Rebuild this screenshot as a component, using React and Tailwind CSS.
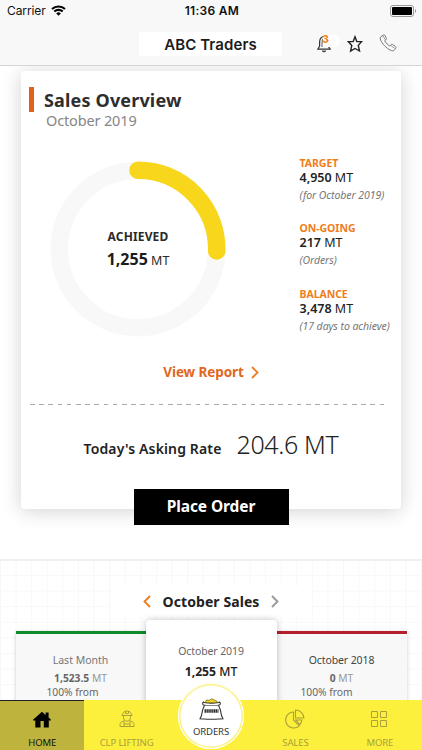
import React from "react";

const stats = [
    { label: "TARGET", value: "4,950", note: "(for October 2019)" },
    { label: "ON-GOING", value: "217", note: "(Orders)" },
    { label: "BALANCE", value: "3,478", note: "(17 days to achieve)" },
];

const Chevron = ({ className, left }) => (
    <svg className={className} width="8" height="13" viewBox="0 0 8 13" fill="none" stroke="currentColor" strokeWidth="1.9">
        <path d={left ? "M7 1 1.5 6.5 7 12" : "M1 1l5.5 5.5L1 12"} />
    </svg>
);

const StatusBar = () => (
    <div className="grid h-[22px] grid-cols-3 items-center pl-[7px] pr-[5px] font-[Inter,sans-serif] text-[12px] leading-[22px] text-[#111]">
        <div className="flex items-center gap-[5px]">
            <span className="tracking-[-0.1px]">Carrier</span>
            <svg className="-mt-[2px]" width="15" height="11" viewBox="0 0 15 11" fill="none" stroke="#000" strokeWidth="2.1">
                <path d="M1 4.1a9.3 9.3 0 0 1 13 0" />
                <path d="M3.3 6.6a6 6 0 0 1 8.4 0" />
                <path d="M7.5 10.8 5.2 8.4a3.4 3.4 0 0 1 4.6 0z" fill="#000" stroke="none" />
            </svg>
        </div>
        <span className="text-center font-semibold tracking-[0.3px]">11:36 AM</span>
        <svg className="-mt-[1px] justify-self-end" width="27" height="12" viewBox="0 0 27 12">
            <rect x="0.5" y="0.5" width="23" height="11" rx="2.5" fill="none" stroke="#999" />
            <rect x="2" y="2" width="20" height="8" rx="1" fill="#000" />
            <path d="M25 4v4c1.6-.6 1.6-3.4 0-4z" fill="#999" />
        </svg>
    </div>
);

const Header = () => (
    <header className="h-[66px] shrink-0 border-b border-[#d4d4d4] bg-[#f8f8f8]">
        <StatusBar />
        <div className="flex h-[43px] items-center">
            <h1 className="ml-[139px] h-[24px] w-[143px] bg-white text-center font-[Inter,sans-serif] text-[15px] font-semibold leading-[25px] tracking-[0.1px] text-[#1c1c1c]">
                ABC Traders
            </h1>
            <div className="ml-[32px] flex items-center">
                <div className="relative h-[20px] w-[26px]">
                    <svg className="absolute left-[3px] top-[1px]" width="14" height="18" viewBox="0 0 14 18" fill="none" stroke="#333" strokeWidth="1.2">
                        <path d="M6.5 1.5C3.5 2 2.6 4.5 2.6 7.5V11L.8 14.2h12.400L11.500 11.500v-1" />
                        <path d="M6.500 3.600C5.300 4.400 5 6 5 8v4" stroke="#777" />
                        <path d="M5.500 15.500c.4 1.500 2.600 1.500 3 0" />
                    </svg>
                    <span className="absolute left-[9px] top-[1px] h-[12px] w-[17px] rounded-r-full bg-white" />
                    <span className="absolute left-[8px] top-0 font-[Inter,sans-serif] text-[10.500px] font-extrabold leading-[11px] text-[#f5871f]">3</span>
                </div>
                <svg className="ml-[7px]" width="16" height="18" viewBox="0 0 16 18" fill="none" stroke="#222" strokeWidth="1.4">
                    <path d="M8 1.800 9.800 6.600h4.800L11.300 10.400l1.200 5.600L8 13.500 3.600 16 4.800 10.400 1.200 6.600H6.200z" />
                </svg>
                <svg className="-mt-[2px] ml-[16px]" width="18" height="18" viewBox="0 0 18 18" fill="none" stroke="#777" strokeWidth="1">
                    <path d="M4.500 1 1.900 2.600C.4 4 1.500 7.500 5.600 11.800c4 4.100 7.700 5.800 9.400 4.600l1.700-2.100c.5-.7.3-1.300-.3-1.800l-2.600-1.900c-.7-.5-1.300-.4-1.900.2l-1 1.200c-1.700-.7-4.300-3.300-5.200-5.300l1.200-.9c.6-.6.7-1.200.3-1.900L5.800 1.300C5.500.8 5 .7 4.500 1z" />
                    <path d="m3.800 1.800 2.600 4M12 11.700l3.700 2.700" strokeWidth="0.7" />
                </svg>
            </div>
        </div>
    </header>
);

const AchievedRing = () => (
    <div className="grid h-[176px] w-[176px] place-items-center">
        <svg className="col-start-1 row-start-1" width="176" height="176" viewBox="0 0 176 176" fill="none" strokeWidth="17.5">
            <circle cx="88" cy="88" r="78.7" stroke="#f8f8f8" />
            <path d="M88 9.3A78.7 78.7 0 0 1 166.690 90" stroke="#f8d61c" strokeLinecap="round" />
        </svg>
        <div className="col-start-1 row-start-1 pt-[1px] text-center text-[#2a2a2a]">
            <div className="text-[12px] font-bold leading-[20px] tracking-[0.15px]">ACHIEVED</div>
            <div className="text-[12.500px] leading-[24px]">
                <b className="text-[16px] text-[#1c1c1c]">1,255</b> MT
            </div>
        </div>
    </div>
);

const SalesOverview = () => (
    <section className="mx-[21px] mt-[5px] flex h-[438px] flex-col rounded-[4px] bg-white shadow-[0_2px_20px_rgba(0,0,0,0.18)]">
        <div className="flex pl-[8px] pt-[16px]">
            <span className="h-[25px] w-[5px] bg-[#e0621b]" />
            <div className="pl-[10px]">
                <h2 className="text-[18px] font-bold leading-[26px] tracking-[0.16px] text-[#2e2e2e]">Sales Overview</h2>
                <p className="pl-[2px] text-[14.500px] leading-[15px] tracking-[-0.15px] text-[#868686]">October 2019</p>
            </div>
        </div>
        <div className="mt-[28px] flex pl-[29px]">
            <div className="mt-[5px]">
                <AchievedRing />
            </div>
            <ul className="ml-[73.500px] flex flex-col gap-[16.300px] whitespace-nowrap">
                {stats.map((s) => (
                    <li key={s.label}>
                        <div className="text-[10.500px] font-bold leading-[14px] tracking-[-0.05px] text-[#f07d1a]">{s.label}</div>
                        <div className="text-[12.500px] leading-[16px] text-[#222]">
                            <span className="font-semibold">{s.value}</span> MT
                        </div>
                        <div className="text-[10.500px] italic leading-[19px] tracking-[-0.06px] text-[#777]">{s.note}</div>
                    </li>
                ))}
            </ul>
        </div>
        <a className="mt-[25px] flex items-center justify-center gap-[7px] text-[13.500px] font-bold leading-[20px] tracking-[-0.1px] text-[#e0681f]">
            View Report
            <Chevron className="text-[#ee7d20]" />
        </a>
        <div className="ml-[9px] mt-[22px] h-px w-[354px] shrink-0 bg-[repeating-linear-gradient(90deg,#aaa_0_4.600px,transparent_4.600px_9.200px)]" />
        <div className="mt-[22px] flex items-baseline justify-center gap-[15px] whitespace-nowrap text-[#222]">
            <span className="text-[14px] font-semibold tracking-[0.14px]">Today's Asking Rate</span>
            <span className="text-[25px] font-light leading-[34px] tracking-[-0.35px]">204.6 MT</span>
        </div>
        <button className="mt-auto h-[36px] w-[155px] shrink-0 translate-y-[16px] self-center bg-black text-[15.500px] font-bold tracking-[-0.1px] text-white">
            Place Order
        </button>
    </section>
);

const SideCard = ({ title, value, className, titleClass, noteClass }) => (
    <div className={`mt-[11px] h-[110px] w-[130px] border-t-[3px] bg-[#f8f8f8] text-center shadow-[0_1px_4px_rgba(0,0,0,0.2)] ${className}`}>
        <div className={`pt-[17px] text-[10.500px] leading-[18px] ${titleClass}`}>{title}</div>
        <div className="pt-[2px] text-[10.250px] leading-[14px] text-[#999]">
            <b className="text-[#666]">{value}</b> MT
        </div>
        <div className={`text-[10.250px] leading-[14px] text-[#666] ${noteClass}`}>100% from</div>
    </div>
);

const MonthlySales = () => (
    <section className="mt-[50px] h-[200px] border-t-2 border-[#f0f0f0] bg-[linear-gradient(#f8f8f8_1px,transparent_1px),linear-gradient(90deg,#f8f8f8_1px,transparent_1px)] bg-[length:15.600px_15.600px] bg-[position:0_14px]">
        <div className="mx-auto mt-[25px] flex h-[30px] w-[200px] items-center justify-center gap-[12px] bg-white text-[14px] font-bold tracking-[0.08px] text-[#222]">
            <Chevron left className="text-[#ee7d20]" />
            October Sales
            <Chevron className="text-[#999]" />
        </div>
        <div className="mt-[4px] flex justify-center">
            <SideCard title="Last Month" value="1,523.5" className="border-[#118a2b]" titleClass="text-[#777]" noteClass="pr-[16px]" />
            <div className="z-10 h-[120px] w-[131px] shrink-0 rounded-[4px] bg-white text-center shadow-[0_0_6px_rgba(0,0,0,0.25)]">
                <div className="pt-[23px] text-[10.500px] leading-[17px] tracking-[-0.1px] text-[#666]">October 2019</div>
                <div className="pt-[2px] text-[12.200px] font-medium leading-[20px] text-[#222]">
                    <b>1,255</b> MT
                </div>
            </div>
            <SideCard title="October 2018" value="0" className="border-[#b3202c]" titleClass="tracking-[-0.1px] text-[#444]" noteClass="pr-[30px]" />
        </div>
    </section>
);

const NavItem = ({ label, className, children }) => (
    <div className={`flex flex-1 flex-col items-center ${className}`}>
        <div className="flex h-[38px] items-center">{children}</div>
        <span className="text-[9.500px] leading-[10px] tracking-[-0.1px]">{label}</span>
    </div>
);

const BottomNav = () => (
    <nav className="relative z-20 flex h-[50px] shrink-0 bg-[#fcf03c] text-[#aaa03c]">
        <NavItem label="HOME" className="bg-[#beb33d] text-[#111] shadow-[inset_0_1px_0_#222]">
            <svg width="18" height="17" viewBox="0 0 18 17" fill="#000">
                <path d="M9 .8 12.600 4V1.500h3V6.500L18 8.800l-1 1.100-1.200-.9V16.500h-5V10H7.500v6.500H2.300V9L1 9.900 0 8.800z" />
            </svg>
        </NavItem>
        <NavItem label="CLP LIFTING">
            <svg width="16" height="18" viewBox="0 0 16 18" fill="none" stroke="currentColor" strokeWidth="1">
                <path d="M3.500 5.500C3.500 2.800 5.200 1 8 1s4.500 1.800 4.500 4.500M2.500 5.500h11M6.500 1v2.500h3V1M4.500 6v1.500c0 2 1.500 3.700 3.500 3.700s3.500-1.700 3.500-3.700V6" />
                <path d="M5.800 10.500 2.500 12C1.200 12.600 1 13.500 1 16.500h14c0-3-.2-3.900-1.500-4.500l-3.300-1.500M5 11.500v5M11 11.500v5M5 14h6" />
            </svg>
        </NavItem>
        <div className="flex-1" />
        <NavItem label="SALES">
            <svg width="20" height="20" viewBox="0 0 20 20" fill="none" stroke="currentColor" strokeWidth="1.1">
                <path d="M8.500 3A8 8 0 1 0 14.200 16.800L8.500 11z" />
                <path d="M10.500 1v8h8.400A8.400 8.400 0 0 0 10.500 1zM10.800 11h6a8 8 0 0 1-1.900 4.600z" />
            </svg>
        </NavItem>
        <NavItem label="MORE">
            <svg width="17" height="17" viewBox="0 0 17 17" fill="none" stroke="currentColor" strokeWidth="1">
                <path d="M.5.5h6v6h-6zM9.500.5h6v6h-6zM.5 9.500h6v6h-6zM9.500 9.500h6v6h-6z" />
            </svg>
        </NavItem>
        <div className="absolute -top-[17px] left-[178px] flex h-[66px] w-[66px] flex-col items-center rounded-full bg-white shadow-[inset_0_0_0_1px_#fff,inset_0_0_0_2.500px_#fbf28a]">
            <svg className="mt-[15px]" width="25" height="22" viewBox="0 0 25 22" fill="none" stroke="#333" strokeWidth="1.1">
                <path d="M6 5 7.500 2l3 .3 2-1.500 3 1.300 2.700 1.400L19 5z" fill="#f0d91c" stroke="#665d18" strokeWidth="0.7" />
                <path d="M4.500 4C3 5.500 3.500 7 5.500 7.300 3.800 10.500 3 14 2.500 17.500L1 20.800c3 .5 5 .1 7.200.4h8.600c2.200-.3 4.200.1 7.200-.4l-1.500-3.300C22 14 21.200 10.500 19.500 7.300c2-.3 2.500-1.800 1-3.300-1.500 1.700-14.500 1.700-16 0z" fill="#fff" />
                <path d="M6 7.500h13" strokeWidth="0.6" />
                <path d="M5.500 13h14" strokeWidth="3.500" strokeDasharray="1.500 .4" />
            </svg>
            <span className="mt-[7px] text-[9.500px] leading-[10px] tracking-[-0.1px] text-[#333]">ORDERS</span>
        </div>
    </nav>
);

export default function App() {
    return (
        <div className="flex h-[750px] w-[422px] flex-col overflow-hidden bg-white font-['Noto_Sans',sans-serif]">
            <Header />
            <main className="min-h-0 flex-1 overflow-hidden">
                <div className="flow-root">
                    <SalesOverview />
                    <MonthlySales />
                </div>
            </main>
            <BottomNav />
        </div>
    );
}
